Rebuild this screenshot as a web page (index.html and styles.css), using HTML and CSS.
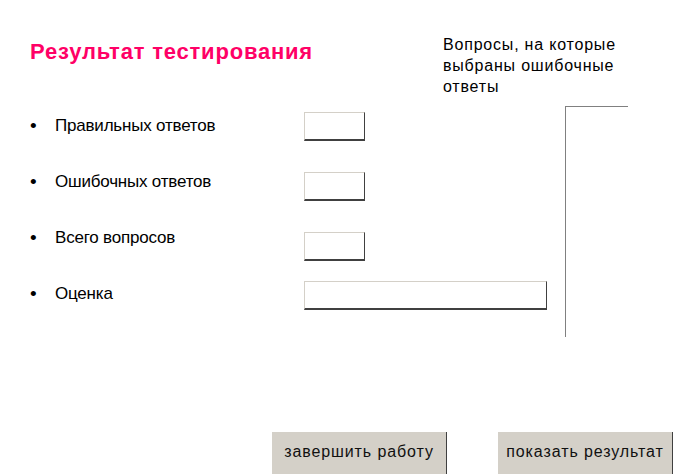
FILE: index.html
```html
<!DOCTYPE html>
<html lang="ru">
<head>
<meta charset="utf-8">
<title>Результат тестирования</title>
<link rel="stylesheet" href="styles.css">
</head>
<body>
<div class="page">
  <div class="top">
    <h1 class="title">Результат тестирования</h1>
    <div class="heading">Вопросы, на которые<br>выбраны ошибочные<br>ответы</div>
  </div>
  <div class="main">
    <div class="stats">
      <ul class="labels">
        <li class="label"><span class="bullet">•</span>Правильных ответов</li>
        <li class="label"><span class="bullet">•</span>Ошибочных ответов</li>
        <li class="label"><span class="bullet">•</span>Всего вопросов</li>
        <li class="label"><span class="bullet">•</span>Оценка</li>
      </ul>
      <div class="fields">
        <div class="field field-small"></div>
        <div class="field field-small"></div>
        <div class="field field-small"></div>
        <div class="field field-wide"></div>
      </div>
    </div>
    <div class="wrong-list"></div>
  </div>
  <div class="actions">
    <button class="btn" type="button">завершить работу</button>
    <button class="btn" type="button">показать результат</button>
  </div>
</div>
</body>
</html>
```
FILE: styles.css
```css
html, body {
  margin: 0;
  padding: 0;
  background: #fff;
}
.page {
  width: 681px;
  height: 474px;
  overflow: hidden;
  font-family: "Liberation Sans", Arial, sans-serif;
  color: #000;
}
.top {
  display: flex;
  padding-top: 34px;
  height: 63px;
}
.title {
  margin: 6px 0 0 30px;
  font-size: 22px;
  line-height: 24px;
  font-weight: bold;
  letter-spacing: 0.8px;
  color: #ff0066;
}
.heading {
  margin-left: auto;
  width: 238px;
  font-size: 16px;
  line-height: 21px;
  letter-spacing: 0.8px;
}
.main {
  display: flex;
  margin-top: 9px;
}
.stats {
  display: flex;
}
.labels {
  list-style: none;
  margin: 10px 0 0 0;
  padding: 0 0 0 30px;
  width: 274px;
  display: flex;
  flex-direction: column;
  gap: 36px;
}
.label {
  display: flex;
  font-size: 17px;
  line-height: 20px;
  letter-spacing: -0.2px;
}
.bullet {
  width: 25px;
  font-size: 19px;
  line-height: 20px;
}
.fields {
  display: flex;
  flex-direction: column;
  padding-top: 6px;
  gap: 31px;
}
.field {
  box-sizing: border-box;
  height: 29px;
  border-top: 1px solid #d4d0c8;
  border-left: 1px solid #d4d0c8;
  border-right: 1px solid #404040;
  border-bottom: 2px solid #404040;
  background: #fff;
}
.field-small {
  width: 61px;
}
.field-wide {
  width: 243px;
  margin-top: -11px;
}
.wrong-list {
  margin-left: 18px;
  width: 62px;
  height: 230px;
  border-top: 1px solid #808080;
  border-left: 1px solid #808080;
}
.actions {
  display: flex;
  gap: 51px;
  padding-left: 272px;
  margin-top: 95px;
}
.btn {
  width: 175px;
  height: 44px;
  padding: 0 0 4px 0;
  border: none;
  border-right: 1px solid #404040;
  background: #d4d0c8;
  font-family: "Liberation Sans", Arial, sans-serif;
  font-size: 16px;
  color: #111;
  letter-spacing: 0.9px;
}
```
